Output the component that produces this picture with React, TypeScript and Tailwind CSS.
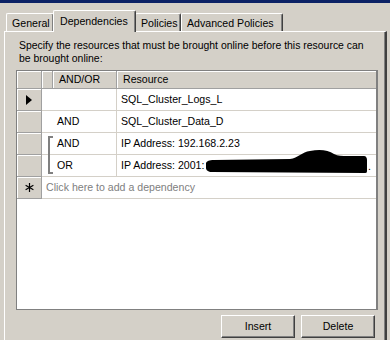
import React from "react";

type Row = {
  op: string;
  resource: string;
  current?: boolean;
  bracket?: "top" | "bottom";
  redacted?: boolean;
};

const rows: Row[] = [
  { op: "", resource: "SQL_Cluster_Logs_L", current: true },
  { op: "AND", resource: "SQL_Cluster_Data_D" },
  { op: "AND", resource: "IP Address: 192.168.2.23", bracket: "top" },
  { op: "OR", resource: "IP Address: 2001:", bracket: "bottom", redacted: true },
];

const tabs = [
  { label: "General", width: "w-[48px]" },
  { label: "Dependencies", width: "w-[83px]", active: true },
  { label: "Policies", width: "w-[46px]" },
  { label: "Advanced Policies", width: "w-[102px]" },
];

function Tab({ label, width, active }: { label: string; width: string; active?: boolean }) {
  if (active) {
    return (
      <div
        className={`${width} relative z-10 h-[22px] -mx-[1px] flex items-start pt-[3px] pl-[6px] bg-[#d4d0c8] border-l border-t border-white border-r border-r-[#404040] rounded-t-[2px] shadow-[inset_-1px_0_0_#808080]`}
      >
        {label}
      </div>
    );
  }
  return (
    <div
      className={`${width} h-[18px] mb-[1px] flex items-start pt-[2px] pl-[5px] bg-[#d4d0c8] border-l border-t border-white border-r border-r-[#404040] rounded-t-[2px] shadow-[inset_-1px_0_0_#808080]`}
    >
      {label}
    </div>
  );
}

// black marker stroke hiding the rest of the address
function Redaction() {
  return (
    <svg
      className="absolute left-[89px] top-[-6px]"
      width="162"
      height="26"
      viewBox="0 0 162 26"
    >
      <path
        d="M0,14 C1,12 3,11 8,11 L84,10 C92,9 96,3 104,2 C114,0 122,1 128,5 C132,7 136,7 142,7 L158,7 C160,7 161,9 161,11 L161,22 C161,24 160,24 158,24 L6,23 C2,23 0,21 0,19 Z"
        fill="#000"
      />
    </svg>
  );
}

function RowHeader({ children }: { children?: React.ReactNode }) {
  return (
    <div className="w-[25px] shrink-0 h-full flex items-center justify-center bg-[#d4d0c8] border-r border-b border-[#a0a0a0] shadow-[inset_1px_1px_0_#ffffff]">
      {children}
    </div>
  );
}

export default function App() {
  return (
    <div className="w-[390px] h-[340px] overflow-hidden bg-[#d4d0c8] text-[10.6px] text-black font-['Liberation_Sans',Arial,sans-serif]">
      <div className="h-[3px] bg-[#0c2266]" />

      <div className="flex items-end h-[29px] pt-[7px] pl-[6px]">
        {tabs.map((t) => (
          <Tab key={t.label} {...t} />
        ))}
      </div>

      <div className="-mt-[1px] ml-[4px] w-[383px] h-[320px] border-l border-t border-white border-r-2 border-r-[#404040] shadow-[inset_-1px_0_0_#808080]">
        <div className="pt-[7px] pl-[14px] leading-[13px] text-[10.45px]">
          Specify the resources that must be brought online before this resource can
          <br />
          be brought online:
        </div>

        <div className="pl-[11px] mt-[5px]">
          <div className="w-[362px] h-[240px] bg-white border-l border-t border-b border-[#808080] border-r-2 border-r-[#808080] flex flex-col">
            <div className="h-[18px] flex bg-[#d4d0c8] border-b border-[#a0a0a0]">
              <div className="w-[25px] shrink-0 border-r border-[#a0a0a0] shadow-[inset_1px_1px_0_#ffffff]" />
              <div className="w-[11px] shrink-0 border-r border-[#a0a0a0] shadow-[inset_1px_1px_0_#ffffff]" />
              <div className="w-[64px] shrink-0 pl-[6px] flex items-center border-r border-[#a0a0a0] shadow-[inset_1px_1px_0_#ffffff]">
                AND/OR
              </div>
              <div className="flex-1 pl-[6px] flex items-center shadow-[inset_1px_1px_0_#ffffff]">
                Resource
              </div>
            </div>

            {rows.map((r, i) => (
              <div key={i} className="h-[22px] flex shrink-0">
                <RowHeader>
                  {r.current && (
                    <svg width="6" height="10" viewBox="0 0 6 10">
                      <polygon points="0,0 6,5 0,10" fill="#000" />
                    </svg>
                  )}
                </RowHeader>
                <div className="w-[11px] shrink-0 h-full border-b border-[#d4d0c8] pl-[6px]">
                  {r.bracket === "top" && (
                    <div className="mt-[3px] h-[19px] w-[5px] border-l-2 border-t-2 border-[#808080]" />
                  )}
                  {r.bracket === "bottom" && (
                    <div className="h-[19px] w-[5px] border-l-2 border-b-2 border-[#808080]" />
                  )}
                </div>
                <div className="w-[64px] shrink-0 h-full flex items-center pl-[4px] border-r border-b border-[#d4d0c8]">
                  {r.op}
                </div>
                <div className="flex-1 relative h-full flex items-center pl-[4px] border-b border-[#d4d0c8]">
                  {r.resource}
                  {r.redacted && (
                    <>
                      <Redaction />
                      <span className="absolute left-[251px] top-[4px]">.</span>
                    </>
                  )}
                </div>
              </div>
            ))}

            <div className="h-[22px] flex shrink-0">
              <RowHeader>
                <svg width="9" height="9" viewBox="0 0 9 9">
                  <g stroke="#000" strokeWidth="1.2">
                    <line x1="4.5" y1="0" x2="4.5" y2="9" />
                    <line x1="0.6" y1="2.2" x2="8.4" y2="6.8" />
                    <line x1="0.6" y1="6.8" x2="8.4" y2="2.2" />
                  </g>
                </svg>
              </RowHeader>
              <div className="flex-1 h-full flex items-center pl-[4px] text-[#808080] border-b border-[#d4d0c8]">
                Click here to add a dependency
              </div>
            </div>

            <div className="flex-1" />
          </div>
        </div>

        <div className="flex justify-end gap-[6px] pr-[10px] mt-[5px]">
          {["Insert", "Delete"].map((b) => (
            <button
              key={b}
              className="w-[74px] h-[23px] flex items-center justify-center bg-[#d4d0c8] border-t border-l border-white border-r border-b border-r-[#404040] border-b-[#404040] shadow-[inset_-1px_-1px_0_#808080]"
            >
              {b}
            </button>
          ))}
        </div>
      </div>
    </div>
  );
}
